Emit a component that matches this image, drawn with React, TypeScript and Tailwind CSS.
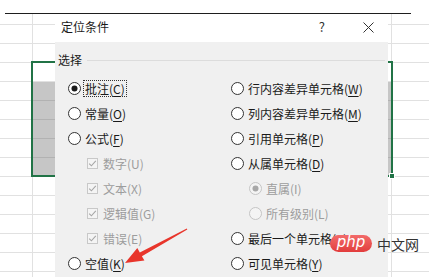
import React from 'react';

type Opt = {
  label: string;
  hotkey: string;
  kind: 'radio' | 'check' | 'sub';
  checked?: boolean;
  disabled?: boolean;
  focus?: boolean;
};

const leftOpts: Opt[] = [
  { label: '批注', hotkey: 'C', kind: 'radio', checked: true, focus: true },
  { label: '常量', hotkey: 'O', kind: 'radio' },
  { label: '公式', hotkey: 'F', kind: 'radio' },
  { label: '数字', hotkey: 'U', kind: 'check', checked: true, disabled: true },
  { label: '文本', hotkey: 'X', kind: 'check', checked: true, disabled: true },
  { label: '逻辑值', hotkey: 'G', kind: 'check', checked: true, disabled: true },
  { label: '错误', hotkey: 'E', kind: 'check', checked: true, disabled: true },
  { label: '空值', hotkey: 'K', kind: 'radio' },
];

const rightOpts: Opt[] = [
  { label: '行内容差异单元格', hotkey: 'W', kind: 'radio' },
  { label: '列内容差异单元格', hotkey: 'M', kind: 'radio' },
  { label: '引用单元格', hotkey: 'P', kind: 'radio' },
  { label: '从属单元格', hotkey: 'D', kind: 'radio' },
  { label: '直属', hotkey: 'I', kind: 'sub', checked: true, disabled: true },
  { label: '所有级别', hotkey: 'L', kind: 'sub', disabled: true },
  { label: '最后一个单元格', hotkey: 'S', kind: 'radio' },
  { label: '可见单元格', hotkey: 'Y', kind: 'radio' },
];

const Radio = ({ checked, disabled }: { checked?: boolean; disabled?: boolean }) => (
  <svg width="13" height="13" viewBox="0 0 13 13" className="shrink-0">
    <circle cx="6.5" cy="6.5" r="6" fill={disabled ? '#f4f4f4' : '#fff'} stroke={disabled ? '#c4c4c4' : '#333'} strokeWidth="1" />
    {checked && <circle cx="6.5" cy="6.5" r="3" fill={disabled ? '#a8a8a8' : '#1a1a1a'} />}
  </svg>
);

const Check = () => (
  <svg width="11" height="11" viewBox="0 0 11 11" className="shrink-0">
    <rect x="0.5" y="0.5" width="10" height="10" fill="#f4f4f4" stroke="#c8c8c8" />
    <polyline points="2.2,5.6 4.4,7.8 8.8,2.8" fill="none" stroke="#a6a6a6" strokeWidth="1.1" />
  </svg>
);

const Option = ({ o }: { o: Opt }) => {
  const color = o.disabled ? 'text-[#9d9d9d]' : 'text-[#1a1a1a]';
  const pad = o.kind === 'check' ? 'pl-[19px] gap-[3px]' : o.kind === 'sub' ? 'pl-[18px] gap-[2px]' : 'gap-[2px]';
  return (
    <div className={`flex h-[25px] items-center ${pad}`}>
      {o.kind === 'check' ? <Check /> : <Radio checked={o.checked} disabled={o.disabled} />}
      <span
        className={`px-[1px] leading-[15px] border ${o.focus ? 'border-dotted border-[#333]' : 'border-transparent'} ${color}`}
      >
        {o.label}(<span className={o.disabled ? '' : 'underline underline-offset-2'}>{o.hotkey}</span>)
      </span>
    </div>
  );
};

const Cell = ({ w, gray }: { w: string; gray?: boolean }) => (
  <div className={`${w} h-full border-b border-r ${gray ? 'bg-[#c6c6c6] border-[#b2b2b2]' : 'border-[#e1e1e1]'}`} />
);

const Row = ({ h, gray }: { h: string; gray?: boolean }) => (
  <div className={`flex ${h}`}>
    <Cell w="w-[33px]" />
    <Cell w="w-[359px]" gray={gray} />
    <div className="flex-1 h-full border-b border-[#e1e1e1]" />
  </div>
);

export default function App() {
  const rows = Array.from({ length: 13 }, (_, i) => i + 1);
  return (
    <div
      className="relative w-[429px] h-[277px] overflow-hidden bg-white text-[12px]"
      style={{ fontFamily: '"Noto Sans CJK SC", "Noto Sans", sans-serif' }}
    >
      <div className="h-[13px]" />
      <div className="ml-[5px] w-[406px] h-px bg-[#1e1e1e]" />
      <Row h="h-[11px]" />
      {rows.map((r) => (
        <Row key={r} h="h-[19px]" gray={r >= 4 && r <= 8} />
      ))}
      <Row h="h-[19px]" />

      {/* selection outline */}
      <div className="absolute left-[31px] top-[61px] w-[362px] h-[116px] border-2 border-[#217346]" />
      <div className="absolute left-[389px] top-[173px] w-[6px] h-[6px] bg-[#217346] border border-white" />

      {/* dialog */}
      <div className="absolute left-[55px] top-[14px] w-[333px] h-[263px] flex flex-col">
        <div className="h-[28px] bg-white flex items-center pl-[6px] text-[#1a1a1a]">
          <span className="flex-1 pb-[2px]">定位条件</span>
          <span className="text-[13px] text-[#333] mr-[38px] pb-[2px]">?</span>
          <svg width="11" height="11" viewBox="0 0 11 11" className="mr-[14px] mb-[2px]">
            <path d="M0.5 0.5 L10.5 10.5 M10.5 0.5 L0.5 10.5" stroke="#333" strokeWidth="1" />
          </svg>
        </div>
        <div className="flex-1 bg-[#f0f0f0] pt-[10px]">
          <div className="flex items-center h-[16px] pl-[3px] pr-[3px]">
            <span className="text-[#1a1a1a]">选择</span>
            <div className="flex-1 h-px bg-[#dcdcdc] ml-[5px]" />
          </div>
          <div className="flex mt-[8px] pl-[13px]">
            <div className="w-[163px] flex flex-col">
              {leftOpts.map((o) => (
                <Option key={o.label} o={o} />
              ))}
            </div>
            <div className="flex-1 flex flex-col">
              {rightOpts.map((o) => (
                <Option key={o.label} o={o} />
              ))}
            </div>
          </div>
        </div>
      </div>

      {/* red arrow */}
      <svg className="absolute left-0 top-0 pointer-events-none" width="429" height="277" viewBox="0 0 429 277">
        <polygon
          points="187.3,229.5 141.9,256.2 144.4,260.6 125,263 137.3,248.1 139.8,252.4 186.8,228.6"
          fill="#e8352b"
        />
      </svg>

      {/* watermark */}
      <div className="absolute left-[330px] top-[235px] flex items-center gap-[5px]">
        <div className="w-[42px] h-[17px] rounded-full bg-gradient-to-b from-[#f26a6a] to-[#e23c3c] flex items-center justify-center">
          <span className="text-white text-[15px] italic leading-none pb-[3px]" style={{ fontFamily: '"DejaVu Sans", sans-serif' }}>
            php
          </span>
        </div>
        <span className="text-[14px] text-[#333] leading-none">中文网</span>
      </div>
    </div>
  );
}
